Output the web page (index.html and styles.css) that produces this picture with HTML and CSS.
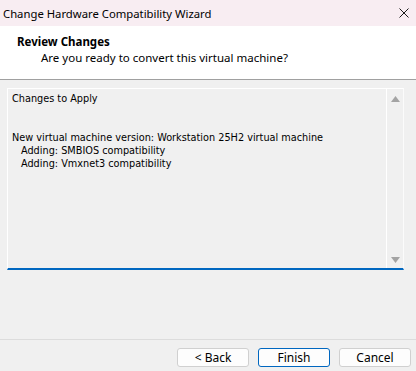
FILE: index.html
```html
<!DOCTYPE html>
<html lang="en">
<head>
  <meta charset="UTF-8" />
  <title>Change Hardware Compatibility Wizard</title>
  <link rel="stylesheet" href="styles.css">
</head>
<body>

<div class="window">
  <div class="titlebar">
    <span class="title">Change Hardware Compatibility Wizard</span>
    <span class="close">
      <svg width="10" height="10" viewBox="0 0 10 10"><path d="M0.5 0.5 L9.5 9.5 M9.5 0.5 L0.5 9.5" stroke="#1a1a1a" stroke-width="1" fill="none"/></svg>
    </span>
  </div>

  <div class="header">
    <div class="header-title">Review Changes</div>
    <div class="header-sub">Are you ready to convert this virtual machine?</div>
  </div>

  <div class="content">
    <div class="panel">
      <div class="panel-text">
        <div class="line">Changes to Apply</div>
        <div class="line"></div>
        <div class="line"></div>
        <div class="line">New virtual machine version: Workstation 25H2 virtual machine</div>
        <div class="line indent">Adding: SMBIOS compatibility</div>
        <div class="line indent">Adding: Vmxnet3 compatibility</div>
      </div>
      <div class="scrollbar">
        <svg width="9" height="6" viewBox="0 0 9 6"><path d="M4.5 0 L9 6 L0 6 Z" fill="#a3a3a3"/></svg>
        <svg width="9" height="6" viewBox="0 0 9 6"><path d="M0 0 L9 0 L4.5 6 Z" fill="#a3a3a3"/></svg>
      </div>
    </div>
  </div>

  <div class="footer">
    <button class="btn">&lt; Back</button>
    <button class="btn primary">Finish</button>
    <button class="btn">Cancel</button>
  </div>
</div>

</body>
</html>
```

FILE: styles.css
```css
* { box-sizing: border-box; }
html, body {
  margin: 0;
  padding: 0;
  width: 100%;
  height: 100%;
  overflow: hidden;
  background: #f0f0f0;
}

.window {
  width: 416px;
  height: 371px;
  display: flex;
  flex-direction: column;
  font-family: "Noto Sans", "Open Sans", sans-serif;
  color: #000;
}

.titlebar {
  height: 26px;
  flex-shrink: 0;
  background: #f8edf2;
  display: flex;
  align-items: center;
  justify-content: space-between;
  padding: 0 7px 0 3px;
  font-size: 11.3px;
}

.close {
  display: flex;
}

.header {
  height: 54px;
  flex-shrink: 0;
  background: #ffffff;
  border-bottom: 1px solid #a0a0a0;
  padding: 8px 0 0 17px;
  font-size: 11.5px;
}

.header-title {
  font-weight: bold;
  line-height: 16px;
}

.header-sub {
  padding-left: 24px;
  line-height: 16px;
}

.content {
  flex: 1;
  padding: 8px 12px 0 7px;
}

.panel {
  height: 182px;
  display: flex;
  background: #f0f0f0;
  border-top: 1px solid #ffffff;
  border-left: 1px solid #ffffff;
  border-right: 1px solid #fbfbfb;
  border-bottom: 2px solid #0067c0;
}

.panel-text {
  flex: 1;
  padding: 3px 0 0 4px;
  font-family: "DejaVu Sans", "Liberation Sans", sans-serif;
  font-size: 10.8px;
  font-stretch: condensed;
}

.line {
  height: 13px;
  line-height: 13px;
  white-space: nowrap;
}

.indent { padding-left: 9px; }

.scrollbar {
  width: 17px;
  border-left: 1px solid #ffffff;
  display: flex;
  flex-direction: column;
  justify-content: space-between;
  align-items: center;
  padding: 7px 0 5px;
}

.footer {
  height: 32px;
  flex-shrink: 0;
  border-top: 1px solid #dcdcdc;
  display: flex;
  justify-content: flex-end;
  align-items: flex-start;
  gap: 9px;
  padding: 8px 5px 0 0;
}

.btn {
  width: 72px;
  height: 19px;
  padding: 0;
  font-family: "Noto Sans", "Open Sans", sans-serif;
  font-size: 12px;
  color: #000;
  background: #fdfdfd;
  border: 1px solid #d0d0d0;
  border-radius: 3px;
  line-height: 16px;
}

.btn.primary {
  border: 1px solid #0067c0;
}
```
